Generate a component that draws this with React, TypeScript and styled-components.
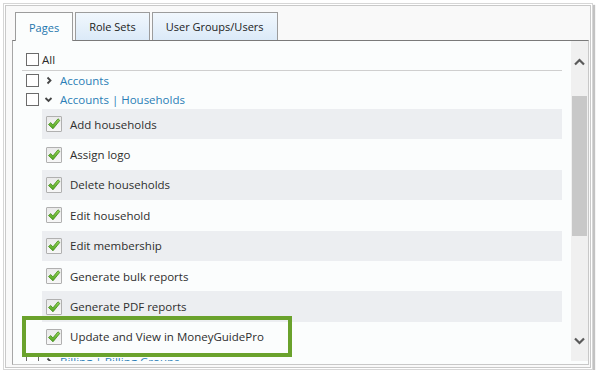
import React from "react";
import styled, { createGlobalStyle, css } from "styled-components";

const GlobalStyle = createGlobalStyle`
    body {
        margin: 0;
        background: #ffffff;
        font-family: "Open Sans", "Noto Sans", sans-serif;
    }
`;

const Outer = styled.div`
    box-sizing: border-box;
    margin: 3px 0 0 3px;
    width: 590px;
    height: 367px;
    border: 1px solid #d6d6d6;
    box-shadow: 2px 2px 1px #c2c2c2;
    padding: 1px;
    background: #ffffff;
`;

const Inner = styled.div`
    box-sizing: border-box;
    height: 100%;
    border: 1px solid #c9c9c9;
    background: #f9f9f9;
    padding: 6px 1px 2px 6px;
    display: flex;
    flex-direction: column;
`;

const TabStrip = styled.div`
    display: flex;
    gap: 2px;
    margin-left: 3px;
    height: 28px;
    position: relative;
    z-index: 1;
`;

const Tab = styled.div<{ active?: boolean }>`
    box-sizing: border-box;
    height: ${(p) => (p.active ? "29px" : "28px")};
    padding: 0 13px;
    display: flex;
    align-items: center;
    border: 1px solid #9c9c9c;
    border-bottom: none;
    font-size: 11px;
    color: #222;
    background: linear-gradient(#f1f7fd, #dbeaf8);

    ${(p) =>
        p.active &&
        css`
            background: #fbfdfd;
            color: #1d76ad;
        `}
`;

const Panel = styled.div`
    flex: 1;
    display: flex;
    border-top: 1px solid #7a7a7a;
    border-left: 1px solid #a6a6a6;
    border-right: 1px solid #c8c8c8;
    border-bottom: 1px solid #c8c8c8;
    background: #fbfdfd;
    padding-bottom: 3px;
    min-height: 0;
`;

const List = styled.div`
    flex: 1;
    position: relative;
    overflow: hidden;
    padding: 10px 9px 0 9px;
`;

const AllRow = styled.div`
    display: flex;
    align-items: center;
    height: 16px;
    font-size: 11.5px;
    color: #2a2a2a;
`;

const Separator = styled.div`
    margin-top: 3px;
    border-top: 1px solid #cfcfcf;
`;

const TreeRow = styled.div`
    display: flex;
    align-items: center;
    height: 19px;
    font-size: 11.5px;
`;

const Box = styled.span`
    box-sizing: border-box;
    width: 13px;
    height: 13px;
    margin-left: 4px;
    border: 1px solid #6b6b6b;
    background: #ffffff;
    flex-shrink: 0;
`;

const AllLabel = styled.span`
    margin-left: 3px;
`;

const Caret = styled.svg`
    width: 21px;
    height: 19px;
    flex-shrink: 0;
`;

const TreeLink = styled.span`
    color: #2a7db6;
`;

const ItemRow = styled.div<{ shaded?: boolean }>`
    display: flex;
    align-items: center;
    gap: 8px;
    height: 30.4px;
    margin-left: 20px;
    padding-left: 4px;
    font-size: 11.5px;
    color: #2e2e2e;
    background: ${(p) => (p.shaded ? "#eceef1" : "transparent")};
`;

const CheckBox = styled.span`
    box-sizing: border-box;
    width: 16px;
    height: 16px;
    border: 1px solid #b0b0b0;
    border-radius: 1px;
    background: linear-gradient(#eaeaea, #f7f7f7);
    display: flex;
    align-items: center;
    justify-content: center;
    flex-shrink: 0;
`;

const Highlight = styled.div`
    position: absolute;
    box-sizing: border-box;
    left: 9px;
    top: 275px;
    width: 270px;
    height: 41px;
    border: 4px solid #6aa22c;
`;

const ScrollBar = styled.div`
    width: 17px;
    background: #f0f0f0;
    display: flex;
    flex-direction: column;
    align-items: center;
`;

const ArrowButton = styled.div`
    height: 41px;
    width: 100%;
    display: flex;
    align-items: center;
    justify-content: center;
`;

const Thumb = styled.div`
    width: 15px;
    height: 140px;
    margin-top: 14px;
    background: #c8c8c8;
`;

const Spacer = styled.div`
    flex: 1;
`;

const Check = () => (
    <svg width="14" height="14" viewBox="0 0 14 14">
        <defs>
            <linearGradient id="chk" x1="0" y1="0" x2="0" y2="1">
                <stop offset="0" stopColor="#9ad85a" />
                <stop offset="1" stopColor="#4da21c" />
            </linearGradient>
        </defs>
        <path
            d="M1.5 7.5 L3.8 5.6 L5.8 8 L11 1.8 L12.8 3.4 L6 11.8 Z"
            fill="url(#chk)"
            stroke="#3f8a17"
            strokeWidth="0.8"
            strokeLinejoin="round"
        />
    </svg>
);

const Chevron = ({ open }: { open?: boolean }) => (
    <Caret viewBox="0 0 21 19">
        {open ? (
            <path d="M6.5 8 L9.5 11 L12.5 8" fill="none" stroke="#454545" strokeWidth="1.8" />
        ) : (
            <path d="M8.5 6.5 L11.5 9.5 L8.5 12.5" fill="none" stroke="#454545" strokeWidth="1.8" />
        )}
    </Caret>
);

const items = [
    "Add households",
    "Assign logo",
    "Delete households",
    "Edit household",
    "Edit membership",
    "Generate bulk reports",
    "Generate PDF reports",
    "Update and View in MoneyGuidePro",
];

export default function App() {
    return (
        <>
            <GlobalStyle />
            <Outer>
                <Inner>
                    <TabStrip>
                        <Tab active>Pages</Tab>
                        <Tab>Role Sets</Tab>
                        <Tab>User Groups/Users</Tab>
                    </TabStrip>
                    <Panel>
                        <List>
                            <AllRow>
                                <Box />
                                <AllLabel>All</AllLabel>
                            </AllRow>
                            <Separator />
                            <TreeRow>
                                <Box />
                                <Chevron />
                                <TreeLink>Accounts</TreeLink>
                            </TreeRow>
                            <TreeRow>
                                <Box />
                                <Chevron open />
                                <TreeLink>Accounts | Households</TreeLink>
                            </TreeRow>
                            {items.map((label, i) => (
                                <ItemRow key={label} shaded={i % 2 === 0}>
                                    <CheckBox>
                                        <Check />
                                    </CheckBox>
                                    {label}
                                </ItemRow>
                            ))}
                            <TreeRow>
                                <Box />
                                <Chevron />
                                <TreeLink>Billing | Billing Groups</TreeLink>
                            </TreeRow>
                            <Highlight />
                        </List>
                        <ScrollBar>
                            <ArrowButton>
                                <svg width="11" height="8" viewBox="0 0 11 8">
                                    <path d="M1 6.5 L5.5 2 L10 6.5" fill="none" stroke="#5a5a5a" strokeWidth="2.2" />
                                </svg>
                            </ArrowButton>
                            <Thumb />
                            <Spacer />
                            <ArrowButton>
                                <svg width="11" height="8" viewBox="0 0 11 8">
                                    <path d="M1 1.5 L5.5 6 L10 1.5" fill="none" stroke="#5a5a5a" strokeWidth="2.2" />
                                </svg>
                            </ArrowButton>
                        </ScrollBar>
                    </Panel>
                </Inner>
            </Outer>
        </>
    );
}
